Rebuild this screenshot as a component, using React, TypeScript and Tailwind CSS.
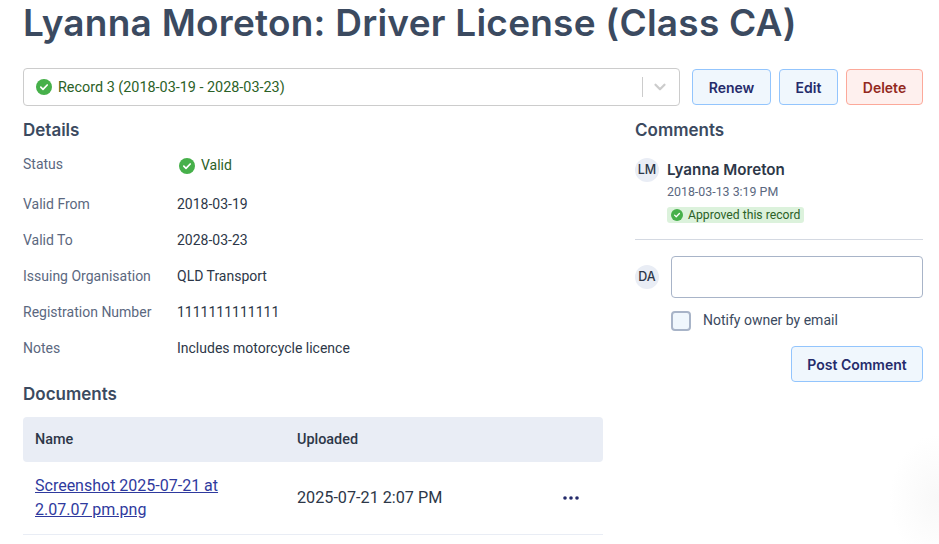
import { ChevronDown } from "lucide-react";

const roboto = "font-['Roboto',sans-serif]";
const inter = "font-['Inter',sans-serif]";

// Círculo verde com o visto
function CheckCircle({ size }: { size: number }) {
    return (
        <svg width={size} height={size} viewBox="0 0 16 16" className="shrink-0">
            <circle cx="8" cy="8" r="8" fill="#46b04a" />
            <path d="M4.8 8.2 7 10.3 11.2 6" fill="none" stroke="#fff" strokeWidth="1.7" strokeLinecap="round" strokeLinejoin="round" />
        </svg>
    );
}

function Avatar({ initials }: { initials: string }) {
    return (
        <div className={`w-6 h-6 rounded-full bg-[#e9edf5] flex items-center justify-center shrink-0 text-[12.5px] font-medium text-[#2d3748] ${inter}`}>
            {initials}
        </div>
    );
}

function Heading({ children }: { children: string }) {
    return <h2 className={`text-[17px] leading-6 font-semibold text-[#3b4a60] ${inter}`}>{children}</h2>;
}

function Row({ label, value }: { label: string; value: string }) {
    return (
        <div className="flex h-9 items-center text-[14px]">
            <span className="w-[154px] text-[#5b6880]">{label}</span>
            <span className="text-[#2d3748]">{value}</span>
        </div>
    );
}

function Button({ children, className }: { children: string; className: string }) {
    return (
        <button className={`h-9 rounded border text-[14px] font-semibold ${inter} ${className}`}>
            {children}
        </button>
    );
}

const blue = "border-[#93c5fd] bg-[#f0f7fd] text-[#252b6b]";

export default function App() {
    return (
        <div className={`relative h-[544px] overflow-hidden bg-white pl-[23px] pr-4 ${roboto}`}>
            <h1 className={`h-[68px] text-[37px] leading-[46px] tracking-[0.24px] font-semibold text-[#3b4a60] whitespace-nowrap ${inter}`}>
                Lyanna Moreton: Driver License (Class CA)
            </h1>

            {/* Seletor de registro e ações */}
            <div className="flex items-center gap-3">
                <div className="flex h-[38px] flex-1 items-center rounded border border-[#cccccc] pl-3">
                    <CheckCircle size={16} />
                    <span className="ml-[6px] flex-1 pt-[2px] text-[14.4px] text-[#2b6127]">Record 3 (2018-03-19 - 2028-03-23)</span>
                    <span className="h-[20px] w-px bg-[#cccccc]" />
                    <ChevronDown size={18} strokeWidth={3} className="ml-2 mr-[10px] text-[#cccccc]" />
                </div>
                <div className="flex gap-2">
                    <Button className={`w-[79px] ${blue}`}>Renew</Button>
                    <Button className={`w-[59px] ${blue}`}>Edit</Button>
                    <Button className="w-[77px] border-[#fca99a] bg-[#fef0ee] text-[#93291e]">Delete</Button>
                </div>
            </div>

            <div className="mt-[12px] flex gap-8">
                {/* Coluna da esquerda */}
                <div className="w-[580px]">
                    <Heading>Details</Heading>
                    <div className="mt-[10px]">
                        <div className="flex h-[36px] text-[14px]">
                            <span className="w-[154px] pt-[2px] text-[#5b6880]">Status</span>
                            <span className="flex items-center self-start gap-[6px] pt-[3px] pl-[2px] text-[#2b6127]">
                                <CheckCircle size={16} />
                                Valid
                            </span>
                        </div>
                        <div className="-mt-[2px]">
                            <Row label="Valid From" value="2018-03-19" />
                            <Row label="Valid To" value="2028-03-23" />
                            <Row label="Issuing Organisation" value="QLD Transport" />
                            <Row label="Registration Number" value="1111111111111" />
                            <Row label="Notes" value="Includes motorcycle licence" />
                        </div>
                    </div>

                    <div className="mt-[16px]">
                        <Heading>Documents</Heading>
                    </div>
                    <div className="mt-[11px] flex h-[45px] items-center rounded bg-[#e9edf5] text-[14.4px] font-medium text-[#2d3748]">
                        <span className="w-[274px] pl-3">Name</span>
                        <span>Uploaded</span>
                    </div>
                    <div className="flex h-[73px] items-center border-b border-[#e9edf5]">
                        <a href="#" className="w-[274px] pl-3 pr-12 text-[16px] leading-6 text-[#2f3a9e] underline">
                            Screenshot 2025-07-21 at 2.07.07 pm.png
                        </a>
                        <span className="flex-1 text-[16.2px] text-[#2d3748]">2025-07-21 2:07 PM</span>
                        <svg width="16" height="4" viewBox="0 0 16 4" className="mr-[24px] fill-[#252b6b]">
                            <circle cx="2" cy="2" r="1.8" />
                            <circle cx="8" cy="2" r="1.8" />
                            <circle cx="14" cy="2" r="1.8" />
                        </svg>
                    </div>
                </div>

                {/* Coluna de comentários */}
                <div className="flex-1">
                    <Heading>Comments</Heading>
                    <div className="mt-[16px] flex gap-2">
                        <Avatar initials="LM" />
                        <div>
                            <p className={`text-[15.2px] leading-6 font-semibold text-[#2d3748] ${inter}`}>Lyanna Moreton</p>
                            <p className="text-[12.4px] leading-[18px] mt-[1px] text-[#5b6880]">2018-03-13 3:19 PM</p>
                            <span className="mt-[6px] inline-flex h-4 items-center gap-[5px] rounded-[3px] bg-[#dcf2dc] px-1 text-[12.2px] text-[#2b6127]">
                                <CheckCircle size={12} />
                                Approved this record
                            </span>
                        </div>
                    </div>
                    <div className="mt-[11px] border-t border-[#d4d9e2]" />
                    <div className="mt-[16px] flex items-center gap-3">
                        <Avatar initials="DA" />
                        <div className="h-[42px] flex-1 rounded border border-[#a8b4c8] bg-white" />
                    </div>
                    <label className="mt-[12px] ml-[36px] flex items-center gap-3 text-[14px] text-[#3b4a60]">
                        <span className="h-5 w-5 rounded border-2 border-[#a8b4c8] bg-[#f0f7fd]" />
                        Notify owner by email
                    </label>
                    <div className="mt-[15px] flex justify-end">
                        <Button className={`w-[132px] ${blue}`}>Post Comment</Button>
                    </div>
                </div>
            </div>

            {/* Sombra suave no canto inferior direito */}
            <div className="pointer-events-none absolute right-0 bottom-[-20px] h-[130px] w-[50px] bg-[radial-gradient(ellipse_at_right,#f8f8f8,#ffffff_70%)]" />
        </div>
    );
}
